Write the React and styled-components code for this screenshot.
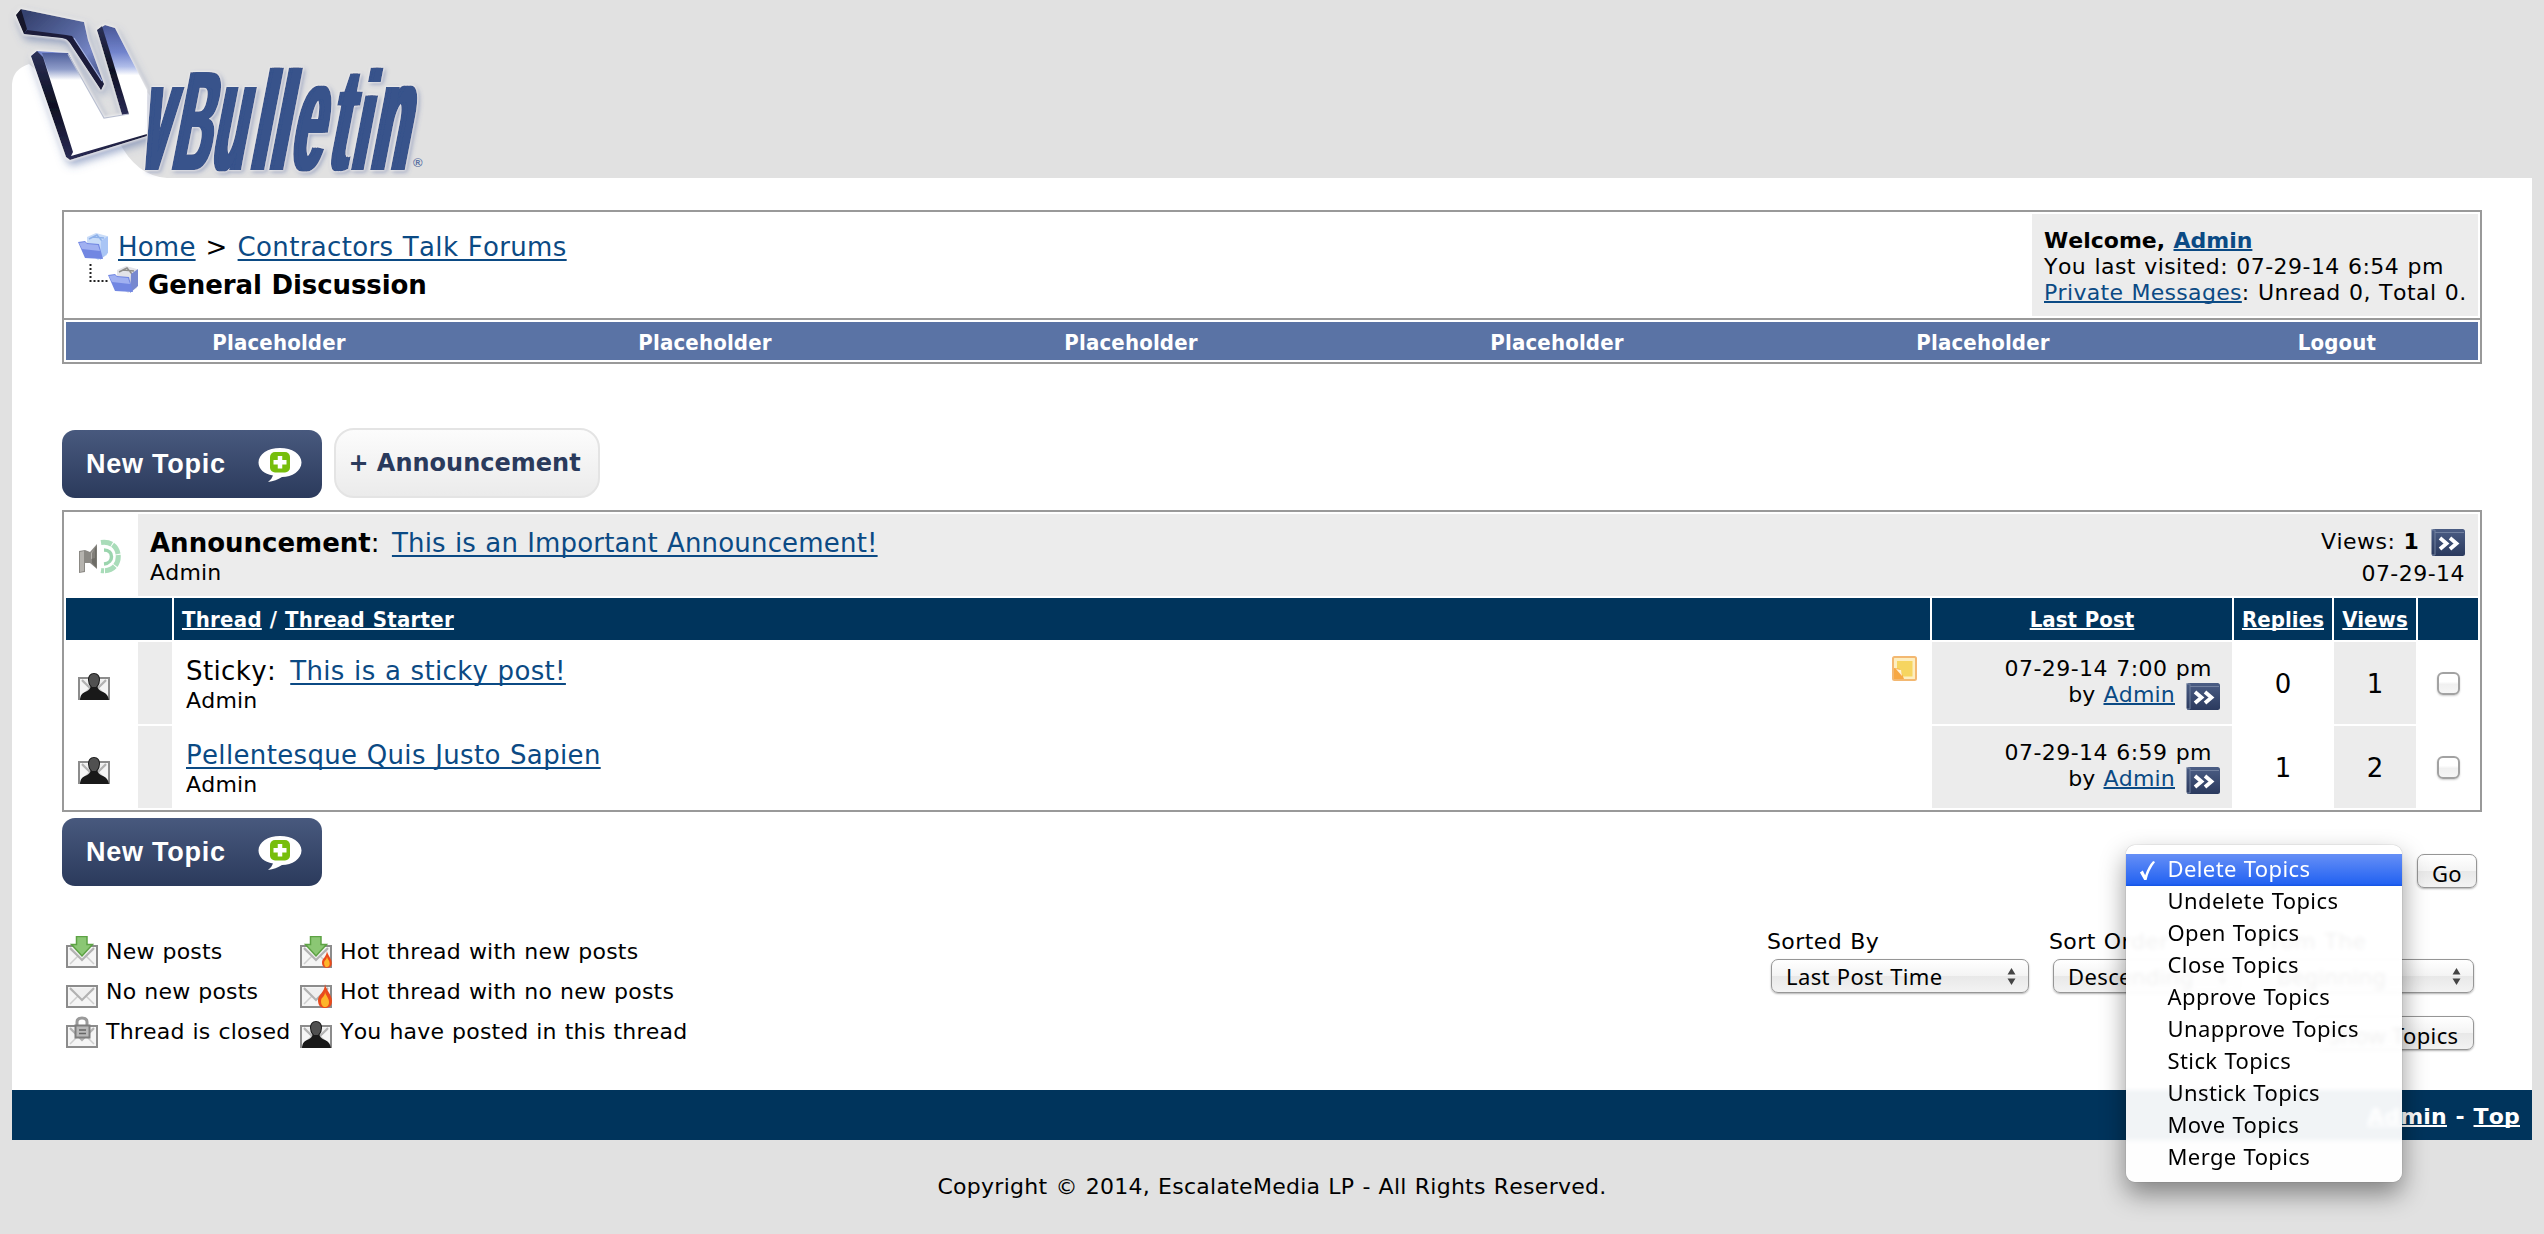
import React from "react";
import styled, { createGlobalStyle } from "styled-components";

const GlobalStyle = createGlobalStyle`
  * { box-sizing: border-box; }
  body {
    margin: 0;
    background: #e1e1e1;
    color: #000;
    font: 22px/26px "DejaVu Sans", Verdana, sans-serif;
    letter-spacing: 0.2px;
    word-spacing: 0.75px;
    font-kerning: none;
  }
  svg { display: block; flex: none; }
`;

const Page = styled.div`
  height: 1234px;
  overflow: hidden;
`;
const Header = styled.header`
  height: 178px;
`;
const Main = styled.main`
  margin: 0 12px;
  padding: 32px 50px 0;
  background: #fff;
`;

const Link = styled.a`
  color: ${(p) => p.$color || "#0b4a84"};
  text-decoration: underline;
  text-decoration-thickness: 2px;
  text-decoration-skip-ink: none;
  text-underline-offset: ${(p) => (p.$drop ?? 1)}px;
  ${(p) => p.$ls !== undefined && `letter-spacing: ${p.$ls}px;`}
`;
const Dates = styled.span`
  letter-spacing: 0.46px;
`;
const Prefix = styled.span`
  margin-right: ${(p) => p.$gap}px;
  letter-spacing: 0.4px;
`;

/* breadcrumb box */
const InfoBox = styled.section`
  border: 2px solid #999;
`;
const InfoTop = styled.div`
  display: flex;
  justify-content: space-between;
  height: 106px;
`;
const Crumbs = styled.div`
  padding: 16px 0 0 14px;
  font-size: 26px;
  line-height: 38px;
`;
const Crumb = styled.div`
  display: flex;
  gap: ${(p) => p.$gap}px;
  height: 38px;
`;
const Arrow = styled.span`
  margin: 0 10px;
`;
const Strong = styled.strong`
  letter-spacing: ${(p) => p.$ls ?? 0}px;
`;
const Welcome = styled.div`
  width: 446px;
  margin: 2px;
  padding: 14px 0 0 12px;
  background: #ececec;
  white-space: nowrap;
`;
const NavWrap = styled.nav`
  border-top: 2px solid #999;
  padding: 2px;
`;
const NavBar = styled.div`
  display: grid;
  grid-template-columns: repeat(5, 426px) 1fr;
  height: 38px;
  background: #5a73a5;
`;
const NavItem = styled.a`
  color: #fff;
  text-align: center;
  font: bold 22px/41px "DejaVu Sans Condensed", "DejaVu Sans", sans-serif;
  font-stretch: condensed;
  letter-spacing: 0.15px;
`;

/* buttons */
const ButtonRow = styled.div`
  display: flex;
  align-items: flex-end;
  gap: 12px;
  height: 70px;
  margin: 64px 0 12px;
`;
const NewTopicButton = styled.button`
  display: flex;
  align-items: center;
  justify-content: space-between;
  width: 260px;
  height: 68px;
  padding: 1px 20px 0 24px;
  border: 0;
  border-radius: 13px;
  background: linear-gradient(#48597e, #2b3a5c);
  color: #fff;
  font: bold 27px "Liberation Sans", Arial, sans-serif;
  letter-spacing: 0.75px;
`;
const AnnouncementButton = styled.button`
  width: 266px;
  height: 70px;
  padding: 0 5px 0 0;
  border: 2px solid #e4e4e4;
  border-radius: 20px;
  background: linear-gradient(#fcfcfc, #ebebeb);
  color: #2a3a5c;
  font: bold 24px "DejaVu Sans", Verdana, sans-serif;
  white-space: nowrap;
`;

/* threads */
const Table = styled.section`
  display: grid;
  gap: 2px;
  padding: 2px;
  border: 2px solid #999;
`;
const AnnouncementRow = styled.div`
  display: grid;
  grid-template-columns: 70px 1fr;
  gap: 2px;
  height: 82px;
`;
const IconCell = styled.div`
  display: flex;
  align-items: center;
  padding: ${(p) => p.$pad || "3px 0 0 12px"};
`;
const AnnouncementBody = styled.div`
  display: flex;
  justify-content: space-between;
  padding: 13px 13px 0 12px;
  background: #ececec;
`;
const Title = styled.div`
  font-size: 26px;
  line-height: 30px;
  margin: ${(p) => p.$m || "0 0 2px"};
`;
const Meta = styled.div`
  text-align: right;
  line-height: 27px;
`;
const MetaLine = styled.div`
  display: flex;
  justify-content: flex-end;
  gap: ${(p) => p.$gap || 0}px;
  margin: ${(p) => p.$m || 0};
`;
const Row = styled.div`
  display: grid;
  grid-template-columns: ${(p) => (p.$head ? "106px" : "70px 34px")} 1756px 300px 98px 82px 60px;
  grid-template-rows: ${(p) => (p.$head ? 42 : 82)}px;
  gap: 2px;
`;
const HeadCell = styled.div`
  padding: 0 0 0 ${(p) => (p.$left ? 8 : 0)}px;
  background: #00345c;
  color: #fff;
  text-align: ${(p) => (p.$left ? "left" : "center")};
  font: bold 22px/44px "DejaVu Sans Condensed", "DejaVu Sans", sans-serif;
  font-stretch: condensed;
  letter-spacing: ${(p) => (p.$left ? 0.25 : 0.05)}px;
`;
const Cell = styled.div`
  background: ${(p) => (p.$shade ? "#ececec" : "#fff")};
`;
const TopicCell = styled(Cell)`
  display: flex;
  justify-content: space-between;
  padding: 14px 13px 0 12px;
`;
const LastPost = styled(Cell)`
  padding: 14px 12px 0 0;
`;
const Center = styled(Cell)`
  display: flex;
  align-items: center;
  justify-content: center;
  padding-top: 1px;
  font-size: 26px;
`;
const Check = styled.span`
  width: 23px;
  height: 23px;
  border: 2px solid #a2a2a2;
  border-radius: 6px;
  background: linear-gradient(#fff 40%, #f0f0f0 55%, #f6f6f6);
  box-shadow: 0 1px 2px rgba(0, 0, 0, 0.2);
`;

/* lower area */
const Lower = styled.section`
  display: flex;
  justify-content: space-between;
  height: 278px;
  padding-top: 6px;
`;
const Legend = styled.div`
  display: grid;
  grid-template-columns: 234px auto;
  grid-auto-rows: 40px;
  margin: 46px 0 0 4px;
`;
const LegendItem = styled.div`
  display: flex;
  align-items: flex-end;
  gap: 8px;
  padding-bottom: 4px;
  line-height: 32px;
  letter-spacing: 0.2px;
  white-space: nowrap;
`;
const Controls = styled.div`
  display: flex;
  flex-direction: column;
  align-items: flex-end;
  padding-top: 36px;
`;
const ModerationRow = styled.div`
  display: flex;
  gap: 15px;
  margin-right: 5px;
`;
const ModerationSelect = styled.div`
  position: relative;
  width: 276px;
  height: 34px;
`;
const control = `
  height: 34px;
  border: 1.5px solid #969696;
  border-radius: 7px;
  background: linear-gradient(#fff, #f4f4f4 49%, #e8e8e8 50%, #f3f3f3);
  box-shadow: 0 1px 2px rgba(0, 0, 0, 0.3);
  color: #000;
  font: 22px/32px "Noto Sans", "Lucida Grande", sans-serif;
  letter-spacing: 0.38px;
  white-space: nowrap;
`;
const PushButton = styled.button`
  ${control}
  width: ${(p) => p.$w}px;
  margin: ${(p) => p.$m || 0};
  padding: 2px 0 0;
`;
const Sorting = styled.div`
  display: grid;
  grid-template-columns: 282px 209px 216px;
  margin: 41px 8px 23px 0;
`;
const Field = styled.div`
  letter-spacing: 0.4px;
`;
const Select = styled.div`
  ${control}
  display: flex;
  align-items: center;
  justify-content: space-between;
  width: ${(p) => p.$w}px;
  margin: 4px 0 0 4px;
  padding: 0 12px 0 14px;
`;
const Menu = styled.ul`
  position: absolute;
  z-index: 2;
  top: -9px;
  left: 0;
  width: 276px;
  margin: 0;
  padding: 9px 0 8px;
  list-style: none;
  border-radius: 9px;
  background: rgba(255, 255, 255, 0.945);
  backdrop-filter: blur(2px);
  box-shadow: 0 0 1px rgba(0, 0, 0, 0.5), 0 12px 26px rgba(0, 0, 0, 0.42);
`;
const MenuItem = styled.li`
  display: grid;
  grid-template-columns: 29px auto;
  height: 32px;
  padding-left: 12.5px;
  font: 22px/28px "Noto Sans", "Lucida Grande", sans-serif;
  letter-spacing: 0.4px;
  white-space: nowrap;
  ${(p) => p.$active && "color: #fff; background: linear-gradient(#668ff6, #2463f2 92%, #1354e4);"}
`;
const TickSlot = styled.span`
  padding-top: 6px;
`;
const FooterBar = styled.footer`
  height: 50px;
  margin: 0 12px;
  padding: 0 12px;
  background: #00345c;
  color: #fff;
  text-align: right;
  font-weight: bold;
  line-height: 54px;
  letter-spacing: 0.2px;
`;
const Copyright = styled.p`
  margin: 34px 0 0;
  text-align: center;
  letter-spacing: 0.27px;
`;

/* drawings */
const LogoSvg = styled.svg`
  overflow: visible;
  font-family: "Liberation Sans", Arial, sans-serif;
  font-weight: bold;
  letter-spacing: 0;
`;
/* character, left edge, horizontal scale, font size, extra stem weight */
const glyphs = [
  ["v", 135, 0.33, 157, 5], ["B", 168, 0.36, 142, 5], ["u", 207, 0.34, 157, 5], ["l", 245, 0.52, 141, 4],
  ["l", 264, 0.52, 141, 4], ["e", 286, 0.36, 157, 5], ["t", 324, 0.4, 148, 5], ["i", 347, 0.4, 141, 5], ["n", 366, 0.38, 157, 6],
];
const Logo = () => (
  <LogoSvg width="440" height="178" viewBox="0 0 440 178">
    <defs>
      <linearGradient id="chrome" gradientUnits="userSpaceOnUse" x1="30" y1="12" x2="92" y2="80">
        <stop offset="0" stopColor="#36426f" />
        <stop offset="0.45" stopColor="#55659d" />
        <stop offset="0.75" stopColor="#7585c4" />
        <stop offset="1" stopColor="#4b598f" />
      </linearGradient>
      <linearGradient id="body" gradientUnits="userSpaceOnUse" x1="0" y1="26" x2="0" y2="84">
        <stop offset="0" stopColor="#4a5898" />
        <stop offset="0.45" stopColor="#7183cc" />
        <stop offset="0.7" stopColor="#b0bde9" />
        <stop offset="0.85" stopColor="#fff" />
      </linearGradient>
      <linearGradient id="bodyTop" x1="0" y1="0" x2="0" y2="1">
        <stop offset="0" stopColor="#4f5f9b" />
        <stop offset="0.6" stopColor="#8e9cc9" />
        <stop offset="1" stopColor="#fff" />
      </linearGradient>
      <linearGradient id="edge" x1="0" y1="0" x2="0" y2="1">
        <stop offset="0" stopColor="#2b3157" />
        <stop offset="0.5" stopColor="#0f1022" />
        <stop offset="1" stopColor="#2a2b55" />
      </linearGradient>
      <filter id="halo" x="-20%" y="-20%" width="140%" height="150%">
        <feDropShadow dx="0" dy="0" stdDeviation="1.5" floodColor="#fff" floodOpacity="1" />
        <feDropShadow dx="2" dy="5" stdDeviation="4" floodColor="#4d639f" floodOpacity="0.55" />
      </filter>
      <filter id="letterHalo" x="-10%" y="-10%" width="120%" height="130%">
        <feDropShadow dx="0" dy="0" stdDeviation="1.2" floodColor="#fff" floodOpacity="1" />
        <feDropShadow dx="2" dy="2" stdDeviation="2" floodColor="#4d639f" floodOpacity="0.45" />
      </filter>
    </defs>
    <path d="M12 178V84Q13 69 29 64L70 100L118 140Q136 176 167 178Z" fill="#fff" />
    <path d="M147 92Q170 118 164 130L148 148Z" fill="#f6f6f8" />
    <g filter="url(#halo)">
      <path d="M16 15L21 9L84 22L88 40L104 84L101 90L68 40L62 38L24 34Z" fill="url(#chrome)" />
      <path d="M16 15L21 9L27 29L24 34Z" fill="#15152b" />
      <path d="M24 34L27 30L66 35L72 36L104 84L101 90L70 43L66 39L62 38Z" fill="#1d1e3a" />
      <path d="M74 38L102 81" stroke="#a5b2e2" strokeWidth="1.2" />
      <path d="M31 56L37 51L68 53L104 118L129 114L97 30L105 25L115 28L147 90V136L71 159L67 157Z" fill="url(#body)" />
      <path d="M42 53L68 53L82 80L51 80Z" fill="url(#bodyTop)" />
      <path d="M31 56L37 51L43 57L73 152L71 156L147 134V136L70 160L66 157Z" fill="url(#edge)" />
      <path d="M97 30L102 26L129 114L122 115Z" fill="url(#edge)" />
      <path d="M68 54L104 118L129 114" fill="none" stroke="#b9bfd0" strokeWidth="1.2" />
      <path d="M70 56L98 33L122 114L104 117Z" fill="#e1e1e4" opacity="0" />
    </g>
    <g fill="#37528b" filter="url(#letterHalo)">
      {glyphs.map(([ch, x, sx, size, weight], i) => (
        <g key={i} transform={`translate(${x} 170) skewX(-11) scale(${sx} 1)`} fontSize={size}>
          <text x="0">{ch}</text>
          <text x={weight / sx / 2}>{ch}</text>
          <text x={weight / sx}>{ch}</text>
        </g>
      ))}
    </g>
    <text x="413" y="167" fontSize="13" fill="#5d72a3">®</text>
  </LogoSvg>
);

const FolderShape = ({ x = 0, y = 0, files }) => (
  <g transform={`translate(${x} ${y})`}>
    <path d="M9 4L18 0L29 3V22L20 27L9 18Z" fill={files ? "#e3e3e8" : "#c9dcf8"} />
    <path d="M11 6L19 2L24 8M15 4L26 5" stroke={files ? "#8e8d8a" : "#8fb2ea"} strokeWidth="1.5" fill="none" />
    <path d="M23 8L30 3V20L22 27Z" fill={files ? "#7788cf" : "#a9c5f5"} />
    <path d="M0 9L7 8L9 10L21 11L25 26L7 25Z" fill="#7287e2" />
    <path d="M1 10L7 9L9 11L20 12L22 18L4 16Z" fill="#a0b0f1" />
  </g>
);
const Folder = () => (
  <svg width="30" height="38"><FolderShape y={5} /></svg>
);
const SubFolder = () => (
  <svg width="60" height="38" overflow="visible">
    <path d="M12.5 -2V15H31" fill="none" stroke="#222" strokeWidth="2" strokeDasharray="2 2" />
    <FolderShape x={30} files />
  </svg>
);
const Bubble = () => (
  <svg width="44" height="36" viewBox="0 0 44 36">
    <path d="M22 1C34 1 43.500 7 43.500 15.500S34 30 24 30Q18 34 10 35Q14 32 15 28.500C6 27 .5 22 .5 15.500C.5 7 10 1 22 1Z" fill="#fff" />
    <rect x="12" y="5" width="20" height="20.500" rx="5" fill="#77be0c" />
    <path d="M22 9V21.500M15.500 15.200H28.500" stroke="#fff" strokeWidth="4.500" />
  </svg>
);
const Megaphone = () => (
  <svg width="44" height="36" viewBox="0 0 44 36">
    <path d="M1 12L7 11L12 13L19 5V30L12 24L7 24V33L1 34Z" fill="#8b8984" />
    <path d="M2 13L6 12V32L2 33ZM13 14L17 10V19L13 20Z" fill="#b5b3ae" />
    <path d="M14 14V24L18.500 29V7Z" fill="#55534f" opacity="0.55" />
    <path d="M23 3.500C46 0 46 35 23 31.500" fill="none" stroke="#a9dcb9" strokeWidth="5" strokeDasharray="11 1" />
    <path d="M26 11C36 11 36 24 26 25" fill="none" stroke="#9bd5ae" strokeWidth="3.500" />
  </svg>
);
const GoTo = () => (
  <svg width="34" height="28" viewBox="0 0 34 28">
    <defs>
      <linearGradient id="goto" x1="0" y1="0" x2="0" y2="1">
        <stop offset="0" stopColor="#4b5d84" />
        <stop offset="1" stopColor="#2b3a5e" />
      </linearGradient>
    </defs>
    <rect x="0.500" y="1" width="33.500" height="27" rx="2.500" fill="url(#goto)" />
    <path d="M0 2H4V27H1M4 4.500H33" fill="none" stroke="#71809f" strokeWidth="1" />
    <path d="M9 10L15.500 15.500L9 21M19 10L25.500 15.500L19 21" fill="none" stroke="#fff" strokeWidth="3.800" />
  </svg>
);
const StickyNote = () => (
  <svg width="25" height="25" viewBox="0 0 25 25">
    <rect x="1" y="1" width="23" height="23" rx="1.500" fill="#fdeec0" stroke="#f3b871" strokeWidth="2" />
    <rect x="5" y="5" width="15.500" height="15.500" fill="#f6d560" />
    <path d="M2 12L8 13L12 23H2Z" fill="#f7a844" />
    <path d="M4 13L9 14L10 20Z" fill="#fff3d8" />
  </svg>
);
const Envelope = () => (
  <g>
    <rect x="1" y="10" width="30" height="21" fill="#f5f5f5" stroke="#8c8c8c" strokeWidth="2" />
    <path d="M4 13L13 21M28 13L19 21M4 28L12 20M28 28L20 20" fill="none" stroke="#cfcfcf" strokeWidth="1.500" />
    <path d="M4 12L16 24L28 12" fill="#efefef" stroke="#b2b2b2" strokeWidth="2" />
  </g>
);
const Down = () => (
  <path d="M10.500 .5H21V8.500H26.500L16 20L5.500 8.500H10.500Z" fill="#8bc774" stroke="#5da244" strokeWidth="1.500" />
);
const Flame = ({ big }) => (
  <g transform={big ? "translate(18 8)" : "translate(22 15) scale(.7)"}>
    <path d="M7 0C8 6 14 11 14 17C14 22 11 24 7 24S0 22 0 16C0 11 7 8 7 0Z" fill="#ea4a1c" />
    <path d="M7 8C8 12 11 14 11 18S9 23 7 23S3 21 3 17S7 13 7 8Z" fill="#fdb52a" />
  </g>
);
const Lock = () => (
  <g>
    <path d="M11 12V6Q11 2 16 2T21 6V12" fill="none" stroke="#9a9a9a" strokeWidth="3" />
    <rect x="9.500" y="9.500" width="14" height="12" fill="#b9b9b9" stroke="#7e7e7e" strokeWidth="2" />
    <path d="M13 14H20M13 17.500H20" stroke="#666" strokeWidth="1.500" />
  </g>
);
const Person = () => (
  <g>
    <path d="M16 5C20 5 22 8 22 12Q22 16 19.500 19Q20 22 25 24Q30 26 31 32H2Q2 26 7 24Q12 22 12.500 19Q10 16 10 12C10 8 12 5 16 5Z" fill="#191919" />
    <path d="M16 6C19 6 21 8 21 12Q21 16 18 19H14Q11 16 11 12C11 8 13 6 16 6Z" fill="#505050" />
  </g>
);
const ThreadIcon = ({ kind }) => (
  <svg width="32" height="32" viewBox="0 0 32 32">
    <Envelope />
    {(kind === "new" || kind === "hotnew") && <Down />}
    {kind === "hotnew" && <Flame />}
    {kind === "hot" && <Flame big />}
    {kind === "closed" && <Lock />}
    {kind === "mine" && <Person />}
  </svg>
);
const Steppers = () => (
  <svg width="9" height="17" viewBox="0 0 9 18">
    <path d="M4.500 0L8.700 6.800H.3ZM4.500 18L8.700 11.200H.3Z" fill="#444" />
  </svg>
);
const Tick = () => (
  <svg width="17" height="21" viewBox="0 0 18 22">
    <path d="M1 13L4 11L6.500 16Q10 6 15 1L17 2Q10 11 8 21H5.500Z" fill="#fff" />
  </svg>
);

const NewTopic = () => (
  <NewTopicButton>
    New Topic
    <Bubble />
  </NewTopicButton>
);

const threads = [
  { prefix: "Sticky:", title: "This is a sticky post!", sticky: true, time: "07-29-14 7:00 pm", replies: 0, views: 1 },
  { title: "Pellentesque Quis Justo Sapien", time: "07-29-14 6:59 pm", replies: 1, views: 2 },
];
const legend = [
  ["new", "New posts"], ["hotnew", "Hot thread with new posts"],
  ["none", "No new posts"], ["hot", "Hot thread with no new posts"],
  ["closed", "Thread is closed"], ["mine", "You have posted in this thread"],
];
const actions = ["Delete", "Undelete", "Open", "Close", "Approve", "Unapprove", "Stick", "Unstick", "Move", "Merge"];

const Thread = ({ t }) => (
  <Row>
    <IconCell $pad="2px 0 0 12px"><ThreadIcon kind="mine" /></IconCell>
    <Cell $shade />
    <TopicCell>
      <div>
        <Title>{t.prefix && <Prefix $gap={14}>{t.prefix}</Prefix>}<Link $drop={3} $ls={0.34}>{t.title}</Link></Title>
        Admin
      </div>
      {t.sticky && <StickyNote />}
    </TopicCell>
    <LastPost $shade>
      <MetaLine $m="0 8px 0 0"><Dates>{t.time}</Dates></MetaLine>
      <MetaLine $gap={11}>
        <span>by <Link>Admin</Link></span>
        <GoTo />
      </MetaLine>
    </LastPost>
    <Center>{t.replies}</Center>
    <Center $shade>{t.views}</Center>
    <Center><Check /></Center>
  </Row>
);

export default function App() {
  return (
    <Page>
      <GlobalStyle />
      <Header><Logo /></Header>
      <Main>
        <InfoBox>
          <InfoTop>
            <Crumbs>
              <Crumb $gap={10}>
                <Folder />
                <div>
                  <Link $drop={3}>Home</Link><Arrow>&gt;</Arrow><Link $drop={3} $ls={0.35}>Contractors Talk Forums</Link>
                </div>
              </Crumb>
              <Crumb $gap={10}>
                <SubFolder />
                <Strong $ls={-0.09}>General Discussion</Strong>
              </Crumb>
            </Crumbs>
            <Welcome>
              <Strong>Welcome, <Link>Admin</Link></Strong><br />
              <Dates>You last visited: 07-29-14 6:54 pm</Dates><br />
              <Link $ls={0.32}>Private Messages</Link><Dates>: Unread 0, Total 0.</Dates>
            </Welcome>
          </InfoTop>
          <NavWrap>
            <NavBar>
              {[1, 2, 3, 4, 5].map((n) => <NavItem key={n}>Placeholder</NavItem>)}
              <NavItem>Logout</NavItem>
            </NavBar>
          </NavWrap>
        </InfoBox>

        <ButtonRow>
          <NewTopic />
          <AnnouncementButton>+ Announcement</AnnouncementButton>
        </ButtonRow>

        <Table>
          <AnnouncementRow>
            <IconCell><Megaphone /></IconCell>
            <AnnouncementBody>
              <div>
                <Title $m="1px 0 2px"><Strong>Announcement</Strong><Prefix $gap={12}>:</Prefix><Link $drop={3} $ls={0.18}>This is an Important Announcement!</Link></Title>
                Admin
              </div>
              <Meta>
                <MetaLine $gap={12} $m="1px 0 4px">
                  <span><Dates>Views: </Dates><strong>1</strong></span>
                  <GoTo />
                </MetaLine>
                <Dates>07-29-14</Dates>
              </Meta>
            </AnnouncementBody>
          </AnnouncementRow>
          <Row $head>
            <HeadCell />
            <HeadCell $left><Link $color="#fff">Thread</Link> / <Link $color="#fff">Thread Starter</Link></HeadCell>
            <HeadCell><Link $color="#fff">Last Post</Link></HeadCell>
            <HeadCell><Link $color="#fff">Replies</Link></HeadCell>
            <HeadCell><Link $color="#fff">Views</Link></HeadCell>
            <HeadCell />
          </Row>
          {threads.map((t) => <Thread key={t.title} t={t} />)}
        </Table>

        <Lower>
          <div>
            <NewTopic />
            <Legend>
              {legend.map(([kind, label]) => (
                <LegendItem key={kind}><ThreadIcon kind={kind} />{label}</LegendItem>
              ))}
            </Legend>
          </div>
          <Controls>
            <ModerationRow>
              <ModerationSelect>
                <Menu>
                  {actions.map((a, i) => (
                    <MenuItem key={a} $active={i === 0}>
                      <TickSlot>{i === 0 && <Tick />}</TickSlot>
                      {a} Topics
                    </MenuItem>
                  ))}
                </Menu>
              </ModerationSelect>
              <PushButton $w={60}>Go</PushButton>
            </ModerationRow>
            <Sorting>
              <Field>Sorted By<Select $w={258}>Last Post Time<Steppers /></Select></Field>
              <Field>Sort Order<Select $w={187}>Descending<Steppers /></Select></Field>
              <Field>From The<Select $w={212}>Beginning<Steppers /></Select></Field>
            </Sorting>
            <PushButton $w={161} $m="0 8px 0 0">Show Topics</PushButton>
          </Controls>
        </Lower>
      </Main>
      <FooterBar><Link $color="#fff">Admin</Link> - <Link $color="#fff">Top</Link></FooterBar>
      <Copyright>Copyright © 2014, EscalateMedia LP - All Rights Reserved.</Copyright>
    </Page>
  );
}
